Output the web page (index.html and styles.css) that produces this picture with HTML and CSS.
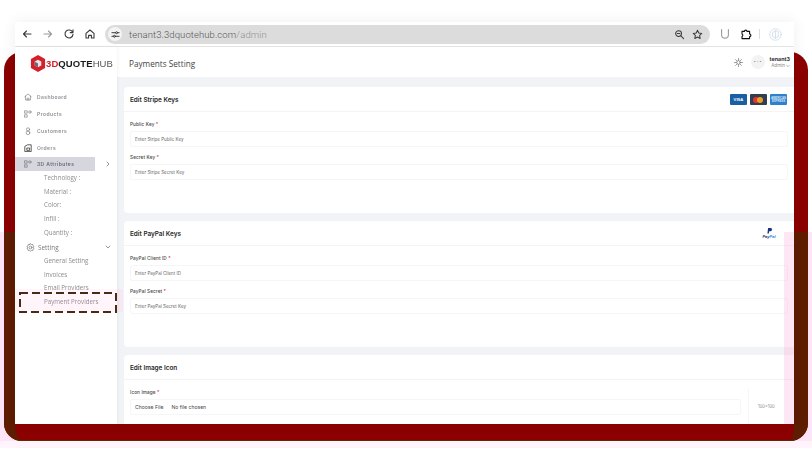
FILE: index.html
```html
<!DOCTYPE html>
<html lang="en">
<head>
<meta charset="utf-8">
<title>Payments Setting</title>
<link rel="stylesheet" href="styles.css">
</head>
<body>
<div class="stage">
  <div class="under"></div>
  <div class="frame"></div>
  <div class="frame-shade"></div>
  <div class="window">
    <div class="toolbar">
      <svg class="tb-icon" viewBox="0 0 12 12"><path d="M10 6H2.5M5.5 3 2.5 6l3 3" class="st dark"/></svg>
      <svg class="tb-icon" viewBox="0 0 12 12"><path d="M2 6h7.5M6.5 3l3 3-3 3" class="st grey"/></svg>
      <svg class="tb-icon" viewBox="0 0 12 12"><path d="M9.6 4.2A4 4 0 1 0 10 6.4M10 1.8v2.8H7.2" class="st dark"/></svg>
      <svg class="tb-icon" viewBox="0 0 12 12"><path d="M2 5.4 6 2l4 3.4V10H7.4V7.4H4.6V10H2z" class="st dark"/></svg>
      <div class="omnibox">
        <span class="tune"><svg viewBox="0 0 10 10"><path d="M1 3h4M7.5 3H9M1 7h1.5M5 7h4" class="st dark"/><circle cx="6.2" cy="3" r="1.1" class="st dark"/><circle cx="3.8" cy="7" r="1.1" class="st dark"/></svg></span>
        <span class="url">tenant3.3dquotehub.com<span class="url-path">/admin</span></span>
        <svg class="omni-icon" viewBox="0 0 12 12"><circle cx="5" cy="5" r="3.2" class="st dark"/><path d="m7.5 7.5 3 3M3.6 5h2.8" class="st dark"/></svg>
        <svg class="omni-icon" viewBox="0 0 12 12"><path d="m6 1.4 1.4 3 3.3.4-2.4 2.2.6 3.3L6 8.7l-2.9 1.6.6-3.3-2.4-2.2 3.3-.4z" class="st dark"/></svg>
      </div>
      <div class="ext">
        <svg class="ext-u" viewBox="0 0 12 12"><path d="M2.6 1.5v5.2a3.4 3.4 0 0 0 6.8 0V1.5" class="st grey"/></svg>
        <svg class="tb-icon" viewBox="0 0 12 12"><path d="M2 3.4h2.4a1.3 1.3 0 0 1 2.6 0h2.6V6a1.3 1.3 0 0 1 0 2.6v2H2V8.400a1.300 1.300 0 0 0 0-2.400z" class="st black"/></svg>
        <span class="tb-sep"></span>
        <span class="avatar"><svg viewBox="0 0 12 12"><circle cx="6" cy="6" r="5.300" class="st pale"/><path d="M6 2.600 3.400 4v4L6 9.400 8.600 8V4zM6 2.600v6.800" class="st pale"/></svg></span>
      </div>
    </div>
    <div class="app">
      <aside class="sidebar">
        <div class="logo">
          <svg class="logo-mark" viewBox="0 0 16 18"><path d="M8 0 15.500 4.300v9.400L8 18 .5 13.700V4.300z" fill="#d3202a"/><path d="M8 5 11.500 7v4L8 13 4.500 11V7z" fill="#e9e5e5"/><path d="M8 9v4L4.500 11V7z" fill="#6b6b6b"/></svg>
          <span class="logo-text"><span class="l-red">3D</span><span class="l-blk">QUOTE</span><span class="l-gry">HUB</span></span>
        </div>
        <nav class="nav">
          <a class="nav-item"><svg class="nav-icon" viewBox="0 0 10 10"><path d="M1 4.600 5 1.200l4 3.400M2 4v4.800h6V4M4 8.800V6.500h2v2.300" class="st thin"/></svg>Dashboard</a>
          <a class="nav-item"><svg class="nav-icon" viewBox="0 0 10 10"><rect x="1" y="1" width="3" height="3" class="st thin"/><circle cx="7.300" cy="2.500" r="1.500" class="st thin"/><rect x="1" y="6" width="3" height="3" class="st thin"/></svg>Products</a>
          <a class="nav-item"><svg class="nav-icon" viewBox="0 0 10 10"><circle cx="5" cy="3" r="2" class="st thin"/><circle cx="5" cy="7.300" r="2.300" class="st thin"/></svg>Customers</a>
          <a class="nav-item"><svg class="nav-icon" viewBox="0 0 10 10"><path d="M1 9V3l3.500-2H9v8z" class="st blackthin"/><rect x="4" y="5" width="3" height="3" class="st blackthin"/></svg>Orders</a>
          <a class="nav-item active"><svg class="nav-icon" viewBox="0 0 10 10"><rect x="1" y="1" width="3" height="3" class="st thin"/><circle cx="7.300" cy="2.500" r="1.500" class="st thin"/><rect x="1" y="6" width="3" height="3" class="st thin"/></svg>3D Attributes<svg class="chev" viewBox="0 0 6 6"><path d="m2 1 2 2-2 2" class="st thin"/></svg></a>
          <a class="sub">Technology :</a>
          <a class="sub">Material :</a>
          <a class="sub">Color:</a>
          <a class="sub">Infill :</a>
          <a class="sub">Quantity :</a>
          <a class="setting"><svg class="set-icon" viewBox="0 0 10 10"><circle cx="5" cy="5" r="1.600" class="st thin"/><path d="M5 .8 6 1.700 7.500 1.600 7.700 3 8.900 4 8.200 5.200 8.900 6.300 7.700 7 7.500 8.400 6 8.300 5 9.200 4 8.300 2.500 8.400 2.300 7 1.100 6.300 1.800 5.200 1.100 4 2.300 3 2.500 1.600 4 1.700z" class="st thin"/></svg>Setting<svg class="chev" viewBox="0 0 6 6"><path d="m1 2 2 2 2-2" class="st thin"/></svg></a>
          <a class="sub">General Setting</a>
          <a class="sub">Invoices</a>
          <a class="sub">Email Providers</a>
          <a class="sub">Payment Providers</a>
        </nav>
      </aside>
      <main class="main">
        <header class="topbar">
          <h1 class="page-title">Payments Setting</h1>
          <div class="top-right">
            <svg class="sun" viewBox="0 0 10 10"><circle cx="5" cy="5" r="2" class="st thin"/><path d="M5 .5v2M5 7.500v2M.5 5h2M7.500 5h2M1.800 1.800l1.400 1.400M6.800 6.800l1.400 1.400M8.200 1.800 6.800 3.200M3.200 6.800 1.800 8.200" class="st thin"/></svg>
            <span class="user-pic">&#8226; &#8211; &#8226;</span>
            <div class="user">
              <span class="user-name">tenant3</span>
              <span class="user-role">Admin <svg class="role-chev" viewBox="0 0 6 6"><path d="m1 2 2 2 2-2" class="st thin"/></svg></span>
            </div>
          </div>
        </header>
        <div class="content">
          <section class="card">
            <div class="card-head">
              <h2>Edit Stripe Keys</h2>
              <div class="pay-badges">
                <span class="badge visa">VISA</span>
                <span class="badge mc"><i class="mc-l"></i><i class="mc-r"></i></span>
                <span class="badge amex">AMERICAN EXPRESS</span>
              </div>
            </div>
            <div class="card-body">
              <label class="field-label">Public Key <b>*</b></label>
              <div class="input">Enter Stripe Public Key</div>
              <label class="field-label">Secret Key <b>*</b></label>
              <div class="input">Enter Stripe Secret Key</div>
            </div>
          </section>
          <section class="card">
            <div class="card-head">
              <h2>Edit PayPal Keys</h2>
              <div class="paypal"><svg viewBox="0 0 10 10"><path d="M3 0h3.500c1.600 0 2.400 1 2 2.500C8.100 4 7 4.800 5.500 4.800H4.500L4 8H2z" fill="#15357f"/></svg><span class="pp-t"><span class="pp-a">Pay</span><span class="pp-b">Pal</span></span></div>
            </div>
            <div class="card-body">
              <label class="field-label">PayPal Client ID <b>*</b></label>
              <div class="input">Enter PayPal Client ID</div>
              <label class="field-label">PayPal Secret <b>*</b></label>
              <div class="input">Enter PayPal Secret Key</div>
            </div>
          </section>
          <section class="card">
            <div class="card-head"><h2>Edit Image Icon</h2></div>
            <div class="card-body file-body">
              <div class="file-col">
                <label class="field-label">Icon Image <b>*</b></label>
                <div class="input file"><span class="file-btn">Choose File</span><span>No file chosen</span></div>
              </div>
              <div class="size-box">100&#215;100</div>
            </div>
          </section>
        </div>
      </main>
    </div>
  </div>
  <div class="tint-side"></div>
  <div class="tint-row"></div>
  <svg class="callout" viewBox="0 0 98 21"><rect x="1" y="1" width="96" height="19" fill="none" stroke="#4a2a12" stroke-width="2" stroke-dasharray="8 4"/></svg>
</div>
</body>
</html>
```
FILE: styles.css
```css
* { box-sizing: border-box; }
html, body { margin: 0; height: 100%; background: #fff; overflow: hidden; }
body { font-family: Inter, "Liberation Sans", sans-serif; color: #333; }
h1, h2 { margin: 0; }
.stage { position: relative; width: 812px; height: 458px; padding: 22px 18px 0 15px; overflow: hidden; }
.under { position: absolute; left: 0; right: 0; top: 232px; height: 216px; background: linear-gradient(#fde4f6 0 209px, #fff4fc 209px); }
.frame { position: absolute; left: 4px; right: 4px; top: 52px; height: 389px; background: #8c0000; border-radius: 18px; }
.frame-shade { position: absolute; left: 4px; right: 4px; top: 232px; height: 209px; border-left: 11px solid #5e1c00; border-right: 14px solid #5e1c00; border-bottom: 1px solid #5e2a00; border-radius: 0 0 18px 18px; }
.window { position: relative; width: 779px; height: 402px; background: #fff; display: flex; flex-direction: column; overflow: hidden; box-shadow: 0 0 14px rgba(0,0,0,.07); filter: blur(.45px); }
.st { fill: none; stroke-width: 1.100; stroke-linecap: round; stroke-linejoin: round; }
.dark { stroke: #3a3a3a; }
.grey { stroke: #9a9a9a; }
.black { stroke: #111; }
.pale { stroke: #c9d8e4; stroke-width: .7; }
.thin { stroke: #666; stroke-width: .7; }
.blackthin { stroke: #222; stroke-width: .9; }
.toolbar { height: 25px; flex: none; display: flex; align-items: center; padding: 0 8px 0 6px; border-bottom: 1px solid #e4e4e4; }
.tb-icon { width: 12px; height: 12px; flex: none; margin-right: 9px; }
.omnibox { width: 605px; height: 19px; padding: 0 7px 0 3px; background: #dcdcdc; border-radius: 10px; display: flex; align-items: center; flex: none; }
.tune { width: 14px; height: 14px; background: #f4f4f4; border-radius: 50%; display: flex; align-items: center; justify-content: center; flex: none; }
.tune svg { width: 9px; height: 9px; }
.url { flex: 1; margin-left: 7px; font: 300 9.500px Roboto, sans-serif; color: #555; letter-spacing: .1px; }
.url-path { color: #909090; }
.omni-icon { width: 11px; height: 11px; margin-left: 7px; flex: none; }
.ext { display: flex; align-items: center; margin-left: 9px; }
.ext-u { width: 12px; height: 12px; margin-right: 9px; }
.ext .tb-icon { margin-right: 7px; }
.tb-sep { width: 1px; height: 10px; background: #ddd; margin-right: 9px; }
.avatar { width: 13px; height: 13px; display: flex; }
.app { flex: 1; display: flex; min-height: 0; }
.sidebar { width: 102px; flex: none; background: #fff; box-shadow: 1px 0 3px rgba(0,0,0,.05); position: relative; }
.logo { height: 31px; display: flex; align-items: center; padding: 2px 0 0 15px; }
.logo-mark { width: 16px; height: 17px; flex: none; }
.logo-text { font: 700 9.500px "Liberation Sans", sans-serif; letter-spacing: .1px; white-space: nowrap; }
.l-red { color: #d3202a; }
.l-blk { color: #1a1a1a; }
.l-gry { color: #555; font-weight: 400; }
.nav { display: flex; flex-direction: column; padding-top: 10px; }
.nav-item { height: 17.100px; display: flex; align-items: center; padding-left: 9px; font: 600 5px Inter, sans-serif; letter-spacing: .42px; color: #8d8d95; }
.nav-icon { width: 8px; height: 8px; margin-right: 5px; flex: none; }
.nav-item.active { background: #d5d6de; width: 80px; height: 14px; margin: 1px 0 -1px; color: #6b6b75; position: relative; }
.chev { width: 6px; height: 6px; position: absolute; right: -16px; top: 4px; }
.sub { height: 13.800px; display: flex; align-items: center; padding-left: 29px; font: 400 6.200px "Open Sans", sans-serif; color: #8b8b8b; }
.setting { position: relative; height: 14px; margin: 1px 0 -1px; display: flex; align-items: center; padding-left: 11px; font: 400 6.400px "Open Sans", sans-serif; color: #777; width: 80px; }
.set-icon { width: 9px; height: 9px; margin-right: 3px; }
.setting .chev { right: -16px; }
.main { flex: 1; min-width: 0; background: #f2f3f6; display: flex; flex-direction: column; }
.topbar { height: 30px; flex: none; background: #fff; display: flex; align-items: center; justify-content: space-between; padding: 0 4px 0 12px; }
.page-title { font: 500 8.200px "Open Sans", sans-serif; color: #444; margin-top: 2px; }
.top-right { display: flex; align-items: center; }
.sun { width: 9px; height: 9px; margin-right: 8px; }
.user-pic { width: 14px; height: 14px; border-radius: 50%; background: #f3f3f3; font-size: 3.500px; color: #777; display: flex; align-items: center; justify-content: center; margin-right: 5px; white-space: nowrap; }
.user { display: flex; flex-direction: column; align-items: flex-end; }
.user-name { font: 700 5.400px Inter, sans-serif; color: #333; line-height: 7px; }
.user-role { font: 400 4.600px Inter, sans-serif; color: #888; line-height: 6px; display: flex; align-items: center; gap: 1px; }
.role-chev { width: 4px; height: 4px; }
.content { padding: 10px 0 0 7px; display: flex; flex-direction: column; gap: 8px; overflow: hidden; flex: 1; min-height: 0; }
.card { background: #fff; border-radius: 4px 0 0 4px; flex: none; height: 126px; }
.card-head { height: 25px; padding: 1px 7px 0 6px; display: flex; align-items: center; justify-content: space-between; border-bottom: 1px solid #f4f4f6; }
.card-head h2 { font: 600 6.400px Inter, sans-serif; color: #2a2a2a; }
.pay-badges { display: flex; gap: 3px; }
.badge { width: 17px; height: 11px; border-radius: 1px; display: flex; align-items: center; justify-content: center; position: relative; }
.visa { background: #1a5fa3; color: #fff; font: 700 4.200px "Liberation Sans", sans-serif; }
.mc { background: #303e52; }
.mc-l, .mc-r { position: absolute; top: 3px; width: 6px; height: 6px; border-radius: 50%; }
.mc-l { left: 3px; background: #e8352b; }
.mc-r { left: 7px; background: #f9a81f; opacity: .92; }
.amex { background: #2f80ce; color: #dbe9f6; font: 700 2.800px/3px "Liberation Sans", sans-serif; text-align: center; }
.paypal { width: 24px; display: flex; flex-direction: column; align-items: center; margin-right: 6px; }
.paypal svg { width: 7px; height: 7px; }
.pp-t { font: 700 italic 4px "Liberation Sans", sans-serif; line-height: 4px; }
.pp-a { color: #15357f; }
.pp-b { color: #2b86cf; }
.card-body { padding: 9px 6px 0; }
.field-label { display: block; font: 500 4.700px/7px Inter, sans-serif; color: #444; letter-spacing: .1px; margin-bottom: 3px; }
.field-label b { color: #c22; font-weight: 500; }
.input { height: 16px; display: flex; align-items: center; padding-left: 4px; margin-bottom: 7px; border: 1px solid #f6f6f8; border-radius: 2px; font: 400 4.500px Inter, sans-serif; color: #666; }
.file-body { display: flex; gap: 7px; }
.file-col { flex: 1; }
.file { font: 400 5.100px Inter, sans-serif; color: #444; padding-left: 0; }
.file-btn { height: 100%; padding: 0 4px; display: flex; align-items: center; margin-right: 4px; }
.size-box { width: 40px; height: 40px; padding-left: 9px; border-left: 1px solid #f5f5f5; font: 400 4.200px/36px Inter, sans-serif; color: #888; }
.tint-side { position: absolute; left: 784px; top: 232px; width: 10px; height: 192px; background: #ff9ad6; opacity: .25; }
.tint-row { position: absolute; left: 15px; top: 289px; width: 108px; height: 23px; background: #ff9ad6; opacity: .1; }
.callout { position: absolute; left: 19px; top: 292px; width: 98px; height: 21px; }
```
